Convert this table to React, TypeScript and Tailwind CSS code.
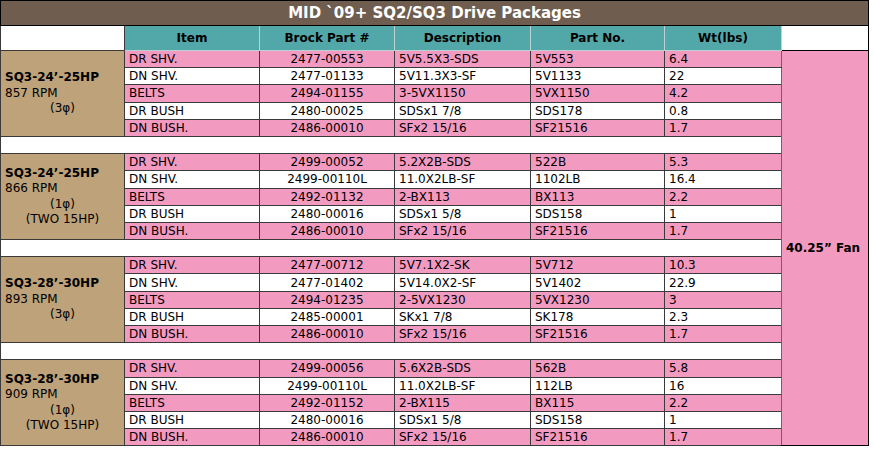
import React from 'react';

interface PartRow { item: string; brock: string; desc: string; partNo: string; wt: string; }
interface Block { model: string; rpm: string; extra: string[]; rows: PartRow[]; }

const r = (item: string, brock: string, desc: string, partNo: string, wt: string): PartRow => ({ item, brock, desc, partNo, wt });

const BLOCKS: Block[] = [
  {
    model: 'SQ3-24’-25HP', rpm: '857 RPM', extra: ['(3φ)'],
    rows: [
      r('DR SHV.', '2477-00553', '5V5.5X3-SDS', '5V553', '6.4'),
      r('DN SHV.', '2477-01133', '5V11.3X3-SF', '5V1133', '22'),
      r('BELTS', '2494-01155', '3-5VX1150', '5VX1150', '4.2'),
      r('DR BUSH', '2480-00025', 'SDSx1 7/8', 'SDS178', '0.8'),
      r('DN BUSH.', '2486-00010', 'SFx2 15/16', 'SF21516', '1.7'),
    ],
  },
  {
    model: 'SQ3-24’-25HP', rpm: '866 RPM', extra: ['(1φ)', '(TWO 15HP)'],
    rows: [
      r('DR SHV.', '2499-00052', '5.2X2B-SDS', '522B', '5.3'),
      r('DN SHV.', '2499-00110L', '11.0X2LB-SF', '1102LB', '16.4'),
      r('BELTS', '2492-01132', '2-BX113', 'BX113', '2.2'),
      r('DR BUSH', '2480-00016', 'SDSx1 5/8', 'SDS158', '1'),
      r('DN BUSH.', '2486-00010', 'SFx2 15/16', 'SF21516', '1.7'),
    ],
  },
  {
    model: 'SQ3-28’-30HP', rpm: '893 RPM', extra: ['(3φ)'],
    rows: [
      r('DR SHV.', '2477-00712', '5V7.1X2-SK', '5V712', '10.3'),
      r('DN SHV.', '2477-01402', '5V14.0X2-SF', '5V1402', '22.9'),
      r('BELTS', '2494-01235', '2-5VX1230', '5VX1230', '3'),
      r('DR BUSH', '2485-00001', 'SKx1 7/8', 'SK178', '2.3'),
      r('DN BUSH.', '2486-00010', 'SFx2 15/16', 'SF21516', '1.7'),
    ],
  },
  {
    model: 'SQ3-28’-30HP', rpm: '909 RPM', extra: ['(1φ)', '(TWO 15HP)'],
    rows: [
      r('DR SHV.', '2499-00056', '5.6X2B-SDS', '562B', '5.8'),
      r('DN SHV.', '2499-00110L', '11.0X2LB-SF', '112LB', '16'),
      r('BELTS', '2492-01152', '2-BX115', 'BX115', '2.2'),
      r('DR BUSH', '2480-00016', 'SDSx1 5/8', 'SDS158', '1'),
      r('DN BUSH.', '2486-00010', 'SFx2 15/16', 'SF21516', '1.7'),
    ],
  },
];

const cell = 'border border-[#3a3a3a] px-[4px] py-0 align-middle whitespace-nowrap';
const head = 'border border-[#b9d3d3] bg-[#52a8a8] text-center font-bold';

export default function App() {
  const total = BLOCKS.length * 5 + BLOCKS.length - 1;
  return (
    <div className="bg-white w-[874px] h-[451px] font-['DejaVu_Sans',Verdana,sans-serif] text-[12px] text-black">
      <table className="table-fixed border-collapse w-[868px]">
        <colgroup>
          <col className="w-[124px]" />
          <col className="w-[135px]" />
          <col className="w-[135px]" />
          <col className="w-[136px]" />
          <col className="w-[134px]" />
          <col className="w-[117px]" />
          <col className="w-[87px]" />
        </colgroup>
        <tbody>
          <tr className="h-[25px]">
            <td colSpan={7} className="border border-black bg-[#6f5e50] text-center text-white font-bold text-[15px] leading-none">
              MID `09+ SQ2/SQ3 Drive Packages
            </td>
          </tr>
          <tr className="h-[25px]">
            <td className="border border-[#3a3a3a] bg-white" />
            <td className={head}>Item</td>
            <td className={head}>Brock Part #</td>
            <td className={head}>Description</td>
            <td className={head}>Part No.</td>
            <td className={head}>Wt(lbs)</td>
            <td className="border border-black bg-white" />
          </tr>
          {BLOCKS.map((b, bi) => (
            <React.Fragment key={bi}>
              {bi > 0 && (
                <tr className="h-[17.2px]">
                  <td colSpan={6} className="border border-[#3a3a3a] bg-white" />
                </tr>
              )}
              {b.rows.map((row, ri) => {
                const bg = ri % 2 === 0 ? 'bg-[#f39ac1]' : 'bg-white';
                return (
                  <tr key={ri} className="h-[17.2px] leading-[14px]">
                    {ri === 0 && (
                      <td rowSpan={5} className="border border-[#3a3a3a] bg-[#bea27a] px-[4px] align-middle leading-[15.5px]">
                        <div className="font-bold">{b.model}</div>
                        <div>{b.rpm}</div>
                        {b.extra.map(e => <div key={e} className="text-center">{e}</div>)}
                      </td>
                    )}
                    <td className={`${cell} ${bg}`}>{row.item}</td>
                    <td className={`${cell} ${bg} text-center`}>{row.brock}</td>
                    <td className={`${cell} ${bg}`}>{row.desc}</td>
                    <td className={`${cell} ${bg}`}>{row.partNo}</td>
                    <td className={`${cell} ${bg} border-r-[#666]`}>{row.wt}</td>
                    {bi === 0 && ri === 0 && (
                      <td rowSpan={total} className="border border-black border-l-[#666] bg-[#f39ac1] px-[4px] align-middle font-bold whitespace-nowrap">
                        40.25” Fan
                      </td>
                    )}
                  </tr>
                );
              })}
            </React.Fragment>
          ))}
        </tbody>
      </table>
    </div>
  );
}
